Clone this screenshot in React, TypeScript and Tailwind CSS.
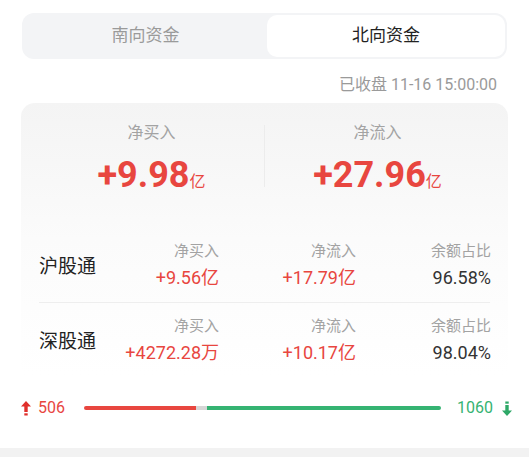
import React from 'react';

const RED = 'text-[#e8463f]';

const UpArrow = () => (
  <svg width="10" height="15" viewBox="0 0 10 15" className="fill-[#e02f2b]">
    <path d="M5 0 L10 5.5 L6.7 5.5 L6.7 11 L3.3 11 L3.3 5.5 L0 5.5 Z" />
    <rect x="3.3" y="12.3" width="3.4" height="2.2" />
  </svg>
);

const DownArrow = () => (
  <svg width="10" height="15" viewBox="0 0 10 15" className="fill-[#2ea867]">
    <rect x="3.3" y="0.5" width="3.4" height="2.2" />
    <path d="M5 15 L10 9.5 L6.7 9.5 L6.7 4 L3.3 4 L3.3 9.5 L0 9.5 Z" />
  </svg>
);

interface RowProps {
  name: string;
  buy: string;
  flow: string;
  ratio: string;
}

const Row: React.FC<RowProps> = ({ name, buy, flow, ratio }) => (
  <div className="grid grid-cols-[44px_136px_137px_135px] items-center">
    <div className="whitespace-nowrap text-[19px] text-[#222]">{name}</div>
    <div className="flex flex-col items-end">
      <span className="text-[15px] leading-[22px] text-[#a3a3a3]">净买入</span>
      <span className={`text-[18px] leading-[32px] whitespace-nowrap ${RED}`}>{buy}</span>
    </div>
    <div className="flex flex-col items-end">
      <span className="text-[15px] leading-[22px] text-[#a3a3a3]">净流入</span>
      <span className={`text-[18px] leading-[32px] whitespace-nowrap ${RED}`}>{flow}</span>
    </div>
    <div className="flex flex-col items-end">
      <span className="text-[15px] leading-[22px] text-[#a3a3a3]">余额占比</span>
      <span className="text-[18px] leading-[32px] text-[#333]">{ratio}</span>
    </div>
  </div>
);

export default function App() {
  return (
    <div
      className="w-[529px] h-[457px] bg-white overflow-hidden flex flex-col"
      style={{ fontFamily: '"Roboto", "Noto Sans CJK SC", sans-serif' }}
    >
      {/* tabs */}
      <div className="mx-[22px] mt-[13px] h-[46px] rounded-[12px] bg-[#f3f4f6] p-[2px] flex">
        <div className="flex-1 flex items-center justify-center text-[17px] text-[#9a9a9a]">南向资金</div>
        <div className="w-[238px] rounded-[10px] bg-white flex items-center justify-center text-[17px] text-[#222]">
          北向资金
        </div>
      </div>

      <div className="mt-[14px] pr-[32px] text-right text-[16px] leading-[24px] text-[#9a9a9a]">
        已收盘 11-16 15:00:00
      </div>

      {/* card */}
      <div className="mx-[21px] mt-[6px] h-[272px] rounded-t-[14px] bg-gradient-to-b from-[#f4f4f4] via-[#fbfbfb] to-white px-[18px]">
        <div className="flex pt-[20px]">
          <div className="flex-1 flex flex-col items-center">
            <span className="text-[16px] leading-[20px] text-[#a3a3a3]">净买入</span>
            <span className={`mt-[12px] font-bold text-[36px] leading-[40px] ${RED}`}>
              +9.98<span className="text-[16px] font-normal">亿</span>
            </span>
          </div>
          <div className="w-px h-[62px] bg-[#ececec] mt-[2px]" />
          <div className="flex-1 flex flex-col items-center">
            <span className="text-[16px] leading-[20px] text-[#a3a3a3]">净流入</span>
            <span className={`mt-[12px] font-bold text-[36px] leading-[40px] ${RED}`}>
              +27.96<span className="text-[16px] font-normal">亿</span>
            </span>
          </div>
        </div>

        <div className="mt-[38px]">
          <Row name="沪股通" buy="+9.56亿" flow="+17.79亿" ratio="96.58%" />
          <div className="h-px bg-[#eeeeee] mt-[8px] mb-[12px]" />
          <Row name="深股通" buy="+4272.28万" flow="+10.17亿" ratio="98.04%" />
        </div>
      </div>

      {/* up/down bar */}
      <div className="mt-[21px] flex items-center pl-[21px] pr-[17px] h-[24px]">
        <UpArrow />
        <span className="ml-[7px] w-[46px] text-[16px] text-[#e8463f]">506</span>
        <div className="flex-1 flex h-[4px]">
          <div className="w-[112px] bg-[#e8463f] rounded-l-full" />
          <div className="w-[11px] bg-[#d6d6d6]" />
          <div className="flex-1 bg-[#35b372] rounded-r-full" />
        </div>
        <span className="w-[52px] text-right text-[16px] text-[#35b372]">1060</span>
        <span className="ml-[9px]">
          <DownArrow />
        </span>
      </div>

      <div className="mt-auto h-[9px] bg-[#f2f2f2]" />
    </div>
  );
}
